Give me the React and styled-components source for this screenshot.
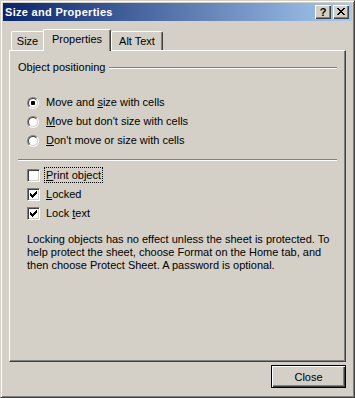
import React from "react";
import styled, { createGlobalStyle } from "styled-components";

const Global = createGlobalStyle`
  html, body { margin: 0; padding: 0; background: #d4d0c8; }
  body { font-family: "Liberation Sans", Arial, sans-serif; font-size: 11px; color: #000; }
  * { box-sizing: border-box; }
`;

const Window = styled.div`
  width: 355px;
  height: 398px;
  background: #d4d0c8;
  border: 1px solid;
  border-color: #d4d0c8 #404040 #404040 #d4d0c8;
  box-shadow: inset 1px 1px #fff, inset -1px -1px #808080;
  padding: 2px;
  display: flex;
  flex-direction: column;
`;

const TitleBar = styled.div`
  height: 18px;
  flex: none;
  background: linear-gradient(to right, #0a246a, #a6caf0);
  display: flex;
  align-items: center;
  justify-content: space-between;
  padding: 0 3px 0 2px;
`;

const Title = styled.span`
  color: #fff;
  font-weight: bold;
  font-size: 11px;
  letter-spacing: 0.3px;
  line-height: 14px;
`;

const CaptionButtons = styled.div`
  display: flex;
  gap: 2px;
`;

const CaptionButton = styled.div`
  width: 16px;
  height: 14px;
  background: #d4d0c8;
  box-shadow: inset 1px 1px #fff, inset -1px -1px #404040, inset -2px -2px #808080;
  display: flex;
  align-items: center;
  justify-content: center;
  font-weight: bold;
  font-size: 11px;
  line-height: 12px;
  padding-bottom: 1px;
`;

const Body = styled.div`
  flex: 1;
  display: flex;
  flex-direction: column;
  padding: 8px 6px 0 6px;
`;

const TabRow = styled.div`
  display: flex;
  align-items: flex-end;
  height: 21px;
  padding-left: 2px;
  position: relative;
  z-index: 1;
`;

const Tab = styled.div`
  width: ${(p) => p.$w}px;
  height: ${(p) => (p.$active ? 22 : 19)}px;
  margin-bottom: ${(p) => (p.$active ? -1 : 0)}px;
  background: #d4d0c8;
  border-top: 1px solid #fff;
  border-left: 1px solid #fff;
  border-right: ${(p) => (p.$hideRight ? "none" : "1px solid #404040")};
  border-radius: ${(p) => (p.$hideRight ? "2px 0 0 0" : "2px 2px 0 0")};
  box-shadow: ${(p) => (p.$hideRight ? "none" : "inset -1px 0 #808080")};
  text-align: center;
  padding-top: 3px;
  line-height: 13px;
`;

const Panel = styled.div`
  height: 312px;
  flex: none;
  border: 1px solid;
  border-color: #fff #404040 #404040 #fff;
  box-shadow: inset -1px -1px #808080;
  padding: 10px 8px 0 8px;
  display: flex;
  flex-direction: column;
`;

const GroupHeader = styled.div`
  display: flex;
  align-items: center;
  line-height: 13px;
  height: 13px;
`;

const Etched = styled.div`
  height: 2px;
  border-top: 1px solid #808080;
  border-bottom: 1px solid #fff;
  flex: ${(p) => (p.$grow ? 1 : "none")};
  margin-left: ${(p) => p.$ml || 0}px;
  margin-top: ${(p) => p.$mt || 0}px;
`;

const OptionList = styled.div`
  display: flex;
  flex-direction: column;
  padding-left: 9px;
  margin-top: ${(p) => p.$mt}px;
`;

const OptionRow = styled.label`
  display: flex;
  align-items: center;
  height: 19px;
  line-height: 13px;
  gap: ${(p) => p.$gap}px;
`;

const Radio = styled.span`
  width: 12px;
  height: 12px;
  border-radius: 50%;
  border: 1px solid;
  border-color: #808080 #fff #fff #808080;
  display: flex;
  align-items: center;
  justify-content: center;
  flex: none;
`;

const RadioInner = styled.span`
  width: 10px;
  height: 10px;
  border-radius: 50%;
  border: 1px solid;
  border-color: #404040 #d4d0c8 #d4d0c8 #404040;
  background: #fff;
  display: flex;
  align-items: center;
  justify-content: center;
`;

const Dot = styled.span`
  width: 4px;
  height: 4px;
  border-radius: 1px;
  background: #000;
`;

const Check = styled.span`
  width: 13px;
  height: 13px;
  flex: none;
  border: 1px solid;
  border-color: #808080 #fff #fff #808080;
  box-shadow: inset 1px 1px #404040, inset -1px -1px #d4d0c8;
  background: #fff;
  display: flex;
  align-items: center;
  justify-content: center;
`;

const Focus = styled.span`
  outline: 1px dotted #000;
  outline-offset: 1px;
`;

const Note = styled.p`
  margin: 10px 0 0 9px;
  line-height: 13px;
`;

const Footer = styled.div`
  display: flex;
  justify-content: flex-end;
  margin-top: 3px;
`;

const Button = styled.button`
  width: 75px;
  height: 23px;
  background: #d4d0c8;
  border: 1px solid #000;
  box-shadow: inset 1px 1px #fff, inset -1px -1px #404040, inset -2px -2px #808080;
  font-family: "Liberation Sans", Arial, sans-serif;
  font-size: 11px;
  color: #000;
  padding: 0;
`;

const CheckMark = () => (
  <svg width="7" height="7" viewBox="0 0 7 7" shapeRendering="crispEdges">
    {[2, 3, 4, 3, 2, 1, 0].map((y, x) => (
      <rect key={x} x={x} y={y} width="1" height="3" fill="#000" />
    ))}
  </svg>
);

const CloseGlyph = () => (
  <svg width="8" height="7" viewBox="0 0 8 7" shapeRendering="crispEdges">
    {[0, 1, 2, 3, 4, 5, 6].map((i) => (
      <g key={i}>
        <rect x={i} y={i} width="2" height="1" fill="#000" />
        <rect x={6 - i} y={i} width="2" height="1" fill="#000" />
      </g>
    ))}
  </svg>
);

const RadioOption = ({ checked, children }) => (
  <OptionRow $gap={7}>
    <Radio>
      <RadioInner>{checked && <Dot />}</RadioInner>
    </Radio>
    <span>{children}</span>
  </OptionRow>
);

const CheckOption = ({ checked, children }) => (
  <OptionRow $gap={6}>
    <Check>{checked && <CheckMark />}</Check>
    <span>{children}</span>
  </OptionRow>
);

export default function App() {
  return (
    <>
      <Global />
      <Window>
        <TitleBar>
          <Title>Size and Properties</Title>
          <CaptionButtons>
            <CaptionButton>?</CaptionButton>
            <CaptionButton>
              <CloseGlyph />
            </CaptionButton>
          </CaptionButtons>
        </TitleBar>
        <Body>
          <TabRow>
            <Tab $w={32} $hideRight>Size</Tab>
            <Tab $w={68} $active>Properties</Tab>
            <Tab $w={52}>Alt Text</Tab>
          </TabRow>
          <Panel>
            <GroupHeader>
              <span>Object positioning</span>
              <Etched $grow $ml={4} />
            </GroupHeader>
            <OptionList $mt={19}>
              <RadioOption checked>
                Move and <u>s</u>ize with cells
              </RadioOption>
              <RadioOption>
                <u>M</u>ove but don't size with cells
              </RadioOption>
              <RadioOption>
                <u>D</u>on't move or size with cells
              </RadioOption>
            </OptionList>
            <Etched $mt={9} />
            <OptionList $mt={5}>
              <CheckOption>
                <Focus>
                  <u>P</u>rint object
                </Focus>
              </CheckOption>
              <CheckOption checked>
                <u>L</u>ocked
              </CheckOption>
              <CheckOption checked>
                Lock <u>t</u>ext
              </CheckOption>
            </OptionList>
            <Note>
              Locking objects has no effect unless the sheet is protected. To
              <br />
              help protect the sheet, choose Format on the Home tab, and
              <br />
              then choose Protect Sheet. A password is optional.
            </Note>
          </Panel>
          <Footer>
            <Button>Close</Button>
          </Footer>
        </Body>
      </Window>
    </>
  );
}
